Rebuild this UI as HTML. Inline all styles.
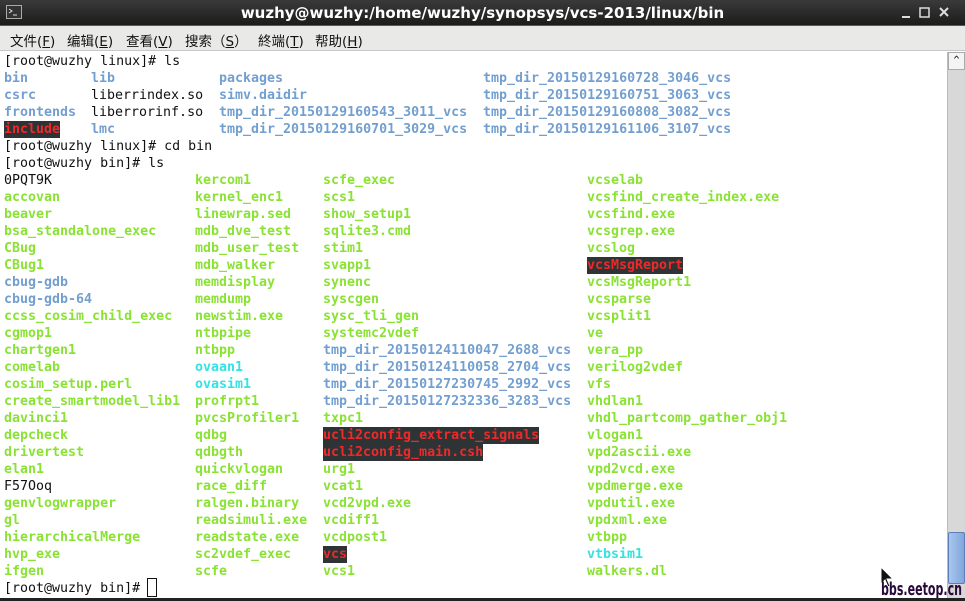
<!DOCTYPE html>
<html><head><meta charset="utf-8"><style>
body{margin:0;width:965px;height:601px;overflow:hidden;background:#fff;position:relative;font-family:"DejaVu Sans Mono","Liberation Mono",monospace}
#title{position:absolute;left:0;top:0;width:965px;height:25px;background:linear-gradient(#3a3a3a,#1c1c1c);border-bottom:1px solid #4a5a70}
#title .t{position:absolute;left:0;width:965px;top:4px;text-align:center;color:#fff;font:bold 15px "DejaVu Sans","Liberation Sans",sans-serif}
#menu{position:absolute;left:0;top:26px;width:965px;height:24px;background:#e9e9e8;border-bottom:1px solid #c8c8c8;font:13.5px "DejaVu Sans","Noto Sans CJK SC",sans-serif;color:#111}
#menu span{position:absolute;top:4px}
.r{position:absolute;height:17px;line-height:17px;font-size:13.3px;white-space:pre;color:#111}
.r span{position:absolute;top:0}
.g{color:#8ae234;font-weight:bold}.b{color:#729fcf;font-weight:bold}.c{color:#34e2e2;font-weight:bold}
.x{color:#ef2929;font-weight:bold;background:#2e3436}
#sb{position:absolute;left:947px;top:52px;width:17px;height:546px;background:#d8d8d8;border-left:1px solid #bbb}
#thumb{position:absolute;left:948px;top:532px;width:15px;height:50px;background:linear-gradient(90deg,#aac6ee,#7fa6dd);border:1px solid #5b7fb8;border-radius:2px}
#bottom{position:absolute;left:0;top:598px;width:965px;height:3px;background:#222}
</style></head><body>
<div id="title"><svg style="position:absolute;left:6px;top:5px" width="16" height="14"><rect x="0.5" y="0.5" width="15" height="13" fill="#333" stroke="#aaa"/><path d="M3 4l3 2-3 2M7 10h4" stroke="#ddd" fill="none"/></svg>
<div class="t">wuzhy@wuzhy:/home/wuzhy/synopsys/vcs-2013/linux/bin</div>
<svg style="position:absolute;left:900px;top:7px" width="60" height="12"><path d="M2 10h8" stroke="#ddd" stroke-width="2"/><rect x="20" y="1" width="9" height="9" fill="none" stroke="#ddd" stroke-width="1.5"/><path d="M40 1l8 8M48 1l-8 8" stroke="#ddd" stroke-width="2"/></svg></div>
<div id="menu"><span style="left:10px">文件(<u>F</u>)</span><span style="left:67px">编辑(<u>E</u>)</span><span style="left:126px">查看(<u>V</u>)</span><span style="left:185px">搜索（<u>S</u>）</span><span style="left:258px">終端(<u>T</u>)</span><span style="left:315px">帮助(<u>H</u>)</span></div>
<div id="sb"></div><div style="position:absolute;left:948px;top:52px;width:15px;height:16px;background:#f4f4f4;border:1px solid #aaa;font-size:10px;text-align:center;line-height:16px">^</div>
<div id="thumb"></div>
<div style="position:absolute;left:0;top:1px">
<div class="r" style="top:52px;left:4px">[root@wuzhy linux]# ls</div>
<div class="r" style="top:69px"><span class="b" style="left:4px">bin</span><span class="b" style="left:91px">lib</span><span class="b" style="left:219px">packages</span><span class="b" style="left:483px">tmp_dir_20150129160728_3046_vcs</span></div>
<div class="r" style="top:86px"><span class="b" style="left:4px">csrc</span><span style="left:91px">liberrindex.so</span><span class="b" style="left:219px">simv.daidir</span><span class="b" style="left:483px">tmp_dir_20150129160751_3063_vcs</span></div>
<div class="r" style="top:103px"><span class="b" style="left:4px">frontends</span><span style="left:91px">liberrorinf.so</span><span class="b" style="left:219px">tmp_dir_20150129160543_3011_vcs</span><span class="b" style="left:483px">tmp_dir_20150129160808_3082_vcs</span></div>
<div class="r" style="top:120px"><span class="x" style="left:4px">include</span><span class="b" style="left:91px">lmc</span><span class="b" style="left:219px">tmp_dir_20150129160701_3029_vcs</span><span class="b" style="left:483px">tmp_dir_20150129161106_3107_vcs</span></div>
<div class="r" style="top:137px;left:4px">[root@wuzhy linux]# cd bin</div>
<div class="r" style="top:154px;left:4px">[root@wuzhy bin]# ls</div>
<div class="r" style="top:171px"><span style="left:4px">0PQT9K</span><span class="g" style="left:195px">kercom1</span><span class="g" style="left:323px">scfe_exec</span><span class="g" style="left:587px">vcselab</span></div>
<div class="r" style="top:188px"><span class="g" style="left:4px">accovan</span><span class="g" style="left:195px">kernel_enc1</span><span class="g" style="left:323px">scs1</span><span class="g" style="left:587px">vcsfind_create_index.exe</span></div>
<div class="r" style="top:205px"><span class="g" style="left:4px">beaver</span><span class="g" style="left:195px">linewrap.sed</span><span class="g" style="left:323px">show_setup1</span><span class="g" style="left:587px">vcsfind.exe</span></div>
<div class="r" style="top:222px"><span class="g" style="left:4px">bsa_standalone_exec</span><span class="g" style="left:195px">mdb_dve_test</span><span class="g" style="left:323px">sqlite3.cmd</span><span class="g" style="left:587px">vcsgrep.exe</span></div>
<div class="r" style="top:239px"><span class="g" style="left:4px">CBug</span><span class="g" style="left:195px">mdb_user_test</span><span class="g" style="left:323px">stim1</span><span class="g" style="left:587px">vcslog</span></div>
<div class="r" style="top:256px"><span class="g" style="left:4px">CBug1</span><span class="g" style="left:195px">mdb_walker</span><span class="g" style="left:323px">svapp1</span><span class="x" style="left:587px">vcsMsgReport</span></div>
<div class="r" style="top:273px"><span class="b" style="left:4px">cbug-gdb</span><span class="g" style="left:195px">memdisplay</span><span class="g" style="left:323px">synenc</span><span class="g" style="left:587px">vcsMsgReport1</span></div>
<div class="r" style="top:290px"><span class="b" style="left:4px">cbug-gdb-64</span><span class="g" style="left:195px">memdump</span><span class="g" style="left:323px">syscgen</span><span class="g" style="left:587px">vcsparse</span></div>
<div class="r" style="top:307px"><span class="g" style="left:4px">ccss_cosim_child_exec</span><span class="g" style="left:195px">newstim.exe</span><span class="g" style="left:323px">sysc_tli_gen</span><span class="g" style="left:587px">vcsplit1</span></div>
<div class="r" style="top:324px"><span class="g" style="left:4px">cgmop1</span><span class="g" style="left:195px">ntbpipe</span><span class="g" style="left:323px">systemc2vdef</span><span class="g" style="left:587px">ve</span></div>
<div class="r" style="top:341px"><span class="g" style="left:4px">chartgen1</span><span class="g" style="left:195px">ntbpp</span><span class="b" style="left:323px">tmp_dir_20150124110047_2688_vcs</span><span class="g" style="left:587px">vera_pp</span></div>
<div class="r" style="top:358px"><span class="g" style="left:4px">comelab</span><span class="c" style="left:195px">ovaan1</span><span class="b" style="left:323px">tmp_dir_20150124110058_2704_vcs</span><span class="g" style="left:587px">verilog2vdef</span></div>
<div class="r" style="top:375px"><span class="g" style="left:4px">cosim_setup.perl</span><span class="c" style="left:195px">ovasim1</span><span class="b" style="left:323px">tmp_dir_20150127230745_2992_vcs</span><span class="g" style="left:587px">vfs</span></div>
<div class="r" style="top:392px"><span class="g" style="left:4px">create_smartmodel_lib1</span><span class="g" style="left:195px">profrpt1</span><span class="b" style="left:323px">tmp_dir_20150127232336_3283_vcs</span><span class="g" style="left:587px">vhdlan1</span></div>
<div class="r" style="top:409px"><span class="g" style="left:4px">davinci1</span><span class="g" style="left:195px">pvcsProfiler1</span><span class="g" style="left:323px">txpc1</span><span class="g" style="left:587px">vhdl_partcomp_gather_obj1</span></div>
<div class="r" style="top:426px"><span class="g" style="left:4px">depcheck</span><span class="g" style="left:195px">qdbg</span><span class="x" style="left:323px">ucli2config_extract_signals</span><span class="g" style="left:587px">vlogan1</span></div>
<div class="r" style="top:443px"><span class="g" style="left:4px">drivertest</span><span class="g" style="left:195px">qdbgth</span><span class="x" style="left:323px">ucli2config_main.csh</span><span class="g" style="left:587px">vpd2ascii.exe</span></div>
<div class="r" style="top:460px"><span class="g" style="left:4px">elan1</span><span class="g" style="left:195px">quickvlogan</span><span class="g" style="left:323px">urg1</span><span class="g" style="left:587px">vpd2vcd.exe</span></div>
<div class="r" style="top:477px"><span style="left:4px">F57Ooq</span><span class="g" style="left:195px">race_diff</span><span class="g" style="left:323px">vcat1</span><span class="g" style="left:587px">vpdmerge.exe</span></div>
<div class="r" style="top:494px"><span class="g" style="left:4px">genvlogwrapper</span><span class="g" style="left:195px">ralgen.binary</span><span class="g" style="left:323px">vcd2vpd.exe</span><span class="g" style="left:587px">vpdutil.exe</span></div>
<div class="r" style="top:511px"><span class="g" style="left:4px">gl</span><span class="g" style="left:195px">readsimuli.exe</span><span class="g" style="left:323px">vcdiff1</span><span class="g" style="left:587px">vpdxml.exe</span></div>
<div class="r" style="top:528px"><span class="g" style="left:4px">hierarchicalMerge</span><span class="g" style="left:195px">readstate.exe</span><span class="g" style="left:323px">vcdpost1</span><span class="g" style="left:587px">vtbpp</span></div>
<div class="r" style="top:545px"><span class="g" style="left:4px">hvp_exe</span><span class="g" style="left:195px">sc2vdef_exec</span><span class="x" style="left:323px">vcs</span><span class="c" style="left:587px">vtbsim1</span></div>
<div class="r" style="top:562px"><span class="g" style="left:4px">ifgen</span><span class="g" style="left:195px">scfe</span><span class="g" style="left:323px">vcs1</span><span class="g" style="left:587px">walkers.dl</span></div>
<div class="r" style="top:579px;left:4px">[root@wuzhy bin]# </div>
</div>
<div style="position:absolute;left:147px;top:578px;width:8px;height:17px;border:1px solid #111"></div>
<svg style="position:absolute;left:880px;top:566px" width="14" height="22"><path d="M1 1v17l4-4 3 7 2-1-3-7h6z" fill="#111" stroke="#fff" stroke-width="1"/></svg>
<svg style="position:absolute;left:880px;top:578px" width="84" height="20"><text x="1" y="17" textLength="81" lengthAdjust="spacingAndGlyphs" font-family="DejaVu Sans" font-weight="bold" font-size="18" fill="#2a0a3a">bbs.eetop.cn</text></svg>
<div id="bottom"></div>
</body></html>
